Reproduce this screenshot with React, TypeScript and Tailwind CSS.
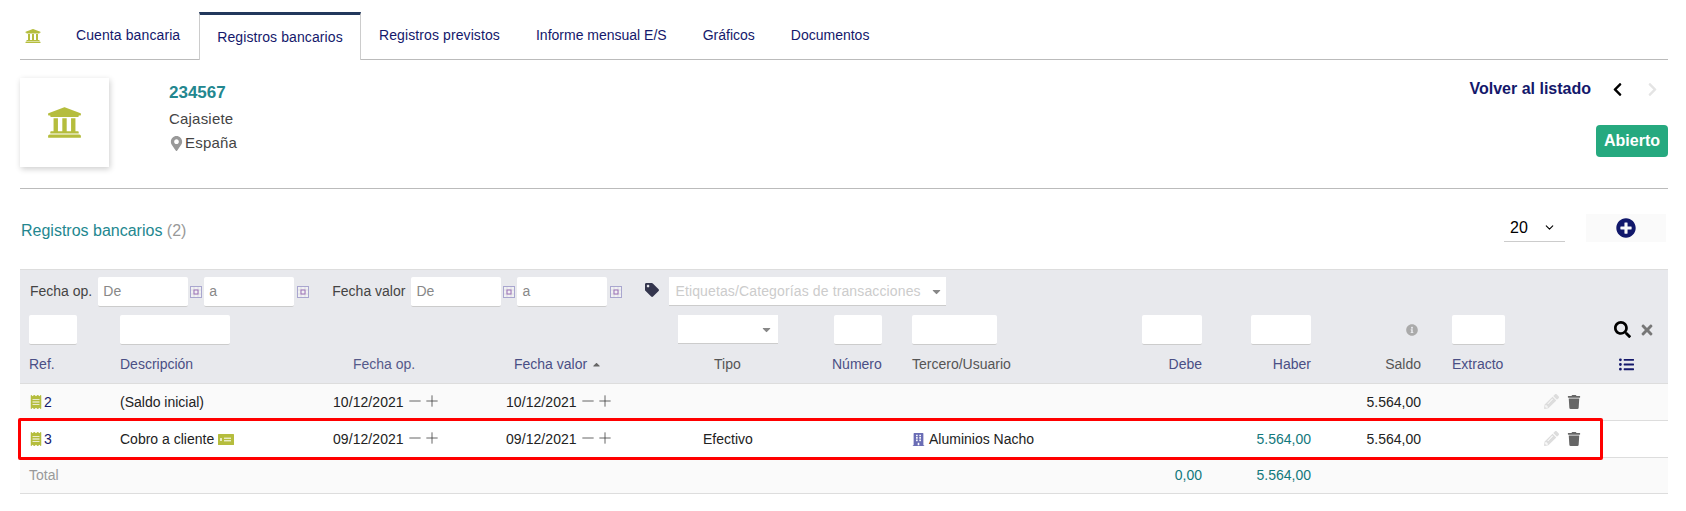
import React from 'react';
import {
  FaUniversity,
  FaMapMarkerAlt,
  FaChevronLeft,
  FaChevronRight,
  FaPlusCircle,
  FaTag,
  FaCaretDown,
  FaCaretUp,
  FaSearch,
  FaTimes,
  FaInfoCircle,
  FaListUl,
  FaReceipt,
  FaPencilAlt,
  FaTrash,
  FaBuilding,
} from 'react-icons/fa';
import {ChevronDown, Minus, Plus} from 'lucide-react';

const tabs = ['Informe mensual E/S', 'Gráficos', 'Documentos'];
const rowGrid =
  'grid grid-cols-[91px_213px_173px_172px_156px_78px_181px_109px_109px_110px_123px_56px_59px] pl-[9px] items-center';

function CalendarIcon() {
  return (
    <svg viewBox="0 0 12 12" className="w-3 h-3 shrink-0">
      <rect x="0.5" y="0.5" width="11" height="11" fill="#f1f1f3" stroke="#a9a6cf" />
      <path d="M4 1v10M8 1v10M1 4h10M1 8h10" stroke="#d4d4dc" strokeWidth="0.7" />
      <rect x="4" y="4" width="4" height="4" fill="#f1f1f3" stroke="#9a6fb5" strokeWidth="1" />
    </svg>
  );
}

function MoneyIcon() {
  return (
    <svg viewBox="0 0 16 11" className="w-4 h-[11px] shrink-0">
      <rect width="16" height="11" rx="0.5" fill="#b5bd3d" />
      <path d="M3 4v3" stroke="#fff" strokeWidth="1.4" />
      <path d="M6 4.2h7M6 6.8h7" stroke="#fff" strokeWidth="1" />
    </svg>
  );
}

function TextBox({className}: {className: string}) {
  return <div className={`h-[30px] bg-white rounded-[2px] border-b border-[#ccc] ${className}`} />;
}

function DateBox({label, className}: {label: string; className: string}) {
  return (
    <div className={`h-[30px] bg-white rounded-[2px] border-b border-[#ccc] pl-[5px] leading-[28px] text-[#888] ${className}`}>
      {label}
    </div>
  );
}

function DateCell({value}: {value: string}) {
  return (
    <span className="flex items-center text-[#222] tracking-[0.06px]">
      {value}
      <Minus size={18} strokeWidth={1} className="ml-[2px] mb-[2px] text-[#333]" />
      <Plus size={18} strokeWidth={1} className="-ml-[1px] mb-[2px] text-[#333]" />
    </span>
  );
}

function RowActions() {
  return (
    <span className="flex items-center gap-[8px] mb-[1px]">
      <FaPencilAlt size={15} className="text-[#ddd]" />
      <FaTrash size={14} className="text-[#666]" />
    </span>
  );
}

export default function App() {
  return (
    <div className="w-[1686px] h-[511px] bg-white pl-[20px] pr-[18px] pt-[12px] text-[14px] overflow-hidden font-['Liberation_Sans',Arial,sans-serif]">
      <nav className="flex h-[48px] border-b border-[#bbb] text-[#14186b]">
        <div className="w-[56px] flex items-center pl-[5px]">
          <FaUniversity size={16} className="text-[#b5bd3d]" />
        </div>
        <a className="w-[123px] flex items-center whitespace-nowrap tracking-[0.1px]">Cuenta bancaria</a>
        <a className="w-[162px] h-[48px] flex items-center justify-center border-t-[3px] border-x border-t-[#22385c] border-x-[#ccc] bg-white tracking-[0.1px]">
          Registros bancarios
        </a>
        <a className="px-[18px] flex items-center tracking-[0.1px]">Registros previstos</a>
        {tabs.map((t) => (
          <a key={t} className="px-[18px] flex items-center">
            {t}
          </a>
        ))}
      </nav>

      <section className="flex h-[129px] border-b border-[#bbb] pt-[18px]">
        <div className="w-[89px] h-[89px] flex items-center justify-center bg-white shadow-[1px_2px_6px_rgba(0,0,0,0.2)]">
          <FaUniversity size={35} className="text-[#b5bd3d]" />
        </div>
        <div className="ml-[60px] pt-[5px]">
          <div className="font-bold text-[17px] leading-[20px] text-[#23878f]">234567</div>
          <div className="mt-[6px] text-[15px] tracking-[0.2px] leading-[20px] text-[#444]">Cajasiete</div>
          <div className="mt-[4px] flex items-center text-[15px] tracking-[0.2px] leading-[20px] text-[#444]">
            <FaMapMarkerAlt size={15} className="text-[#999] mr-[1px]" />
            España
          </div>
        </div>
        <div className="ml-auto flex flex-col items-end">
          <div className="flex items-center h-[32px] mt-[-5px]">
            <span className="font-bold text-[16px] text-[#14186b]">Volver al listado</span>
            <FaChevronLeft size={15} className="ml-[19px] text-black" />
            <FaChevronRight size={15} className="ml-[20px] mr-[8px] text-[#e4e4e4]" />
          </div>
          <span className="mt-[20px] h-[32px] px-[8px] flex items-center rounded-[4px] bg-[#26a97f] text-white font-bold text-[16px]">
            Abierto
          </span>
        </div>
      </section>

      <section className="flex items-center h-[80px]">
        <h2 className="ml-[1px] mt-[4px] text-[16px] text-[#23878f]">
          Registros bancarios <span className="text-[#999]">(2)</span>
        </h2>
        <div className="ml-auto mb-[2px] flex items-center">
          <div className="w-[61px] h-[28px] flex items-center justify-between pl-[6px] pr-[9px] border-b border-[#ccc] text-[16px] text-black">
            20
            <ChevronDown size={13} strokeWidth={2} />
          </div>
          <div className="ml-[21px] mr-[2px] w-[80px] h-[28px] flex items-center justify-center bg-[#fafafa]">
            <FaPlusCircle size={20} className="text-[#11186b]" />
          </div>
        </div>
      </section>

      <section>
        <div className="bg-[#e8e9ed] border-t border-[#ddd] border-b border-b-[#ddd] h-[115px]">
          <div className="flex items-center h-[36px] pt-[7px] pl-[10px] text-[#444]">
            <span>Fecha op.</span>
            <DateBox label="De" className="ml-[6px] w-[90px]" />
            <span className="ml-[2px]"><CalendarIcon /></span>
            <DateBox label="a" className="ml-[2px] w-[90px]" />
            <span className="ml-[3px]"><CalendarIcon /></span>
            <span className="ml-[23px]">Fecha valor</span>
            <DateBox label="De" className="ml-[6px] w-[90px]" />
            <span className="ml-[2px]"><CalendarIcon /></span>
            <DateBox label="a" className="ml-[2px] w-[90px]" />
            <span className="ml-[3px]"><CalendarIcon /></span>
            <FaTag size={14} className="ml-[23px] mb-[4px] text-[#33354d]" />
            <div className="ml-[10px] w-[277px] h-[29px] flex items-center justify-between bg-white border-b border-[#ccc] pl-[6px] pr-[3px] text-[#ccc] tracking-[0.13px]">
              Etiquetas/Categorías de transacciones
              <FaCaretDown size={13} className="text-[#888]" />
            </div>
          </div>
          <div className={`${rowGrid} h-[39px] pt-[8px]`}>
            <TextBox className="w-[48px]" />
            <TextBox className="w-[110px]" />
            <span />
            <span />
            <div className="w-[100px] h-[29px] flex items-center justify-end pr-[5px] bg-white border-b border-[#ccc]">
              <FaCaretDown size={13} className="text-[#888]" />
            </div>
            <TextBox className="w-[48px]" />
            <TextBox className="w-[85px]" />
            <TextBox className="w-[60px] justify-self-end" />
            <TextBox className="w-[60px] justify-self-end" />
            <span className="justify-self-end pr-[3px]"><FaInfoCircle size={12} className="text-[#aaa]" /></span>
            <TextBox className="w-[53px] ml-[31px]" />
            <span />
            <span className="flex items-center gap-[8px] ml-[14px]">
              <FaSearch size={17} className="text-black" />
              <FaTimes size={16} className="text-[#777]" />
            </span>
          </div>
          <div className={`${rowGrid} h-[38px] text-[#4a4f85]`}>
            <span>Ref.</span>
            <span>Descripción</span>
            <span className="pl-[20px] text-[#555a8a]">Fecha op.</span>
            <span className="flex items-center gap-[4px] pl-[8px]">Fecha valor <FaCaretUp size={11} className="text-[#666]" /></span>
            <span className="pl-[36px] text-[#555]">Tipo</span>
            <span className="-ml-[2px]">Número</span>
            <span className="text-[#555]">Tercero/Usuario</span>
            <span className="justify-self-end">Debe</span>
            <span className="justify-self-end">Haber</span>
            <span className="justify-self-end text-[#555]">Saldo</span>
            <span className="pl-[31px]">Extracto</span>
            <span />
            <span className="pl-[19px]"><FaListUl size={15} className="text-[#14186b]" /></span>
          </div>
        </div>

        <div className={`${rowGrid} h-[37px] bg-[#fafafa] border-b border-[#ddd] text-[#222]`}>
          <span className="flex items-center gap-[1px] text-[#14186b]">
            <FaReceipt size={14} className="text-[#b5bd3d]" />2
          </span>
          <span>(Saldo inicial)</span>
          <DateCell value="10/12/2021" />
          <DateCell value="10/12/2021" />
          <span />
          <span />
          <span />
          <span />
          <span />
          <span className="justify-self-end">5.564,00</span>
          <span />
          <RowActions />
          <span />
        </div>

        <div className={`${rowGrid} relative h-[37px] bg-white border-b border-[#ddd] text-[#222]`}>
          <span className="flex items-center gap-[1px] text-[#14186b]">
            <FaReceipt size={14} className="text-[#b5bd3d]" />3
          </span>
          <span className="flex items-center gap-[4px]">
            Cobro a cliente
            <MoneyIcon />
          </span>
          <DateCell value="09/12/2021" />
          <DateCell value="09/12/2021" />
          <span className="pl-[25px]">Efectivo</span>
          <span />
          <span className="flex items-center gap-[4px]">
            <FaBuilding size={13} className="text-[#6a6db5]" />
            Aluminios Nacho
          </span>
          <span />
          <span className="justify-self-end text-[#12787c]">5.564,00</span>
          <span className="justify-self-end">5.564,00</span>
          <span />
          <RowActions />
          <span />
          <div className="absolute left-[-2px] top-[-3px] w-[1585px] h-[42px] border-[3px] border-[#ff0000] rounded-[2px] pointer-events-none" />
        </div>

        <div className={`${rowGrid} h-[36px] bg-[#fafafa] border-b border-[#ddd] text-[#999]`}>
          <span>Total</span>
          <span />
          <span />
          <span />
          <span />
          <span />
          <span />
          <span className="justify-self-end text-[#12787c]">0,00</span>
          <span className="justify-self-end text-[#12787c]">5.564,00</span>
        </div>
      </section>
    </div>
  );
}
